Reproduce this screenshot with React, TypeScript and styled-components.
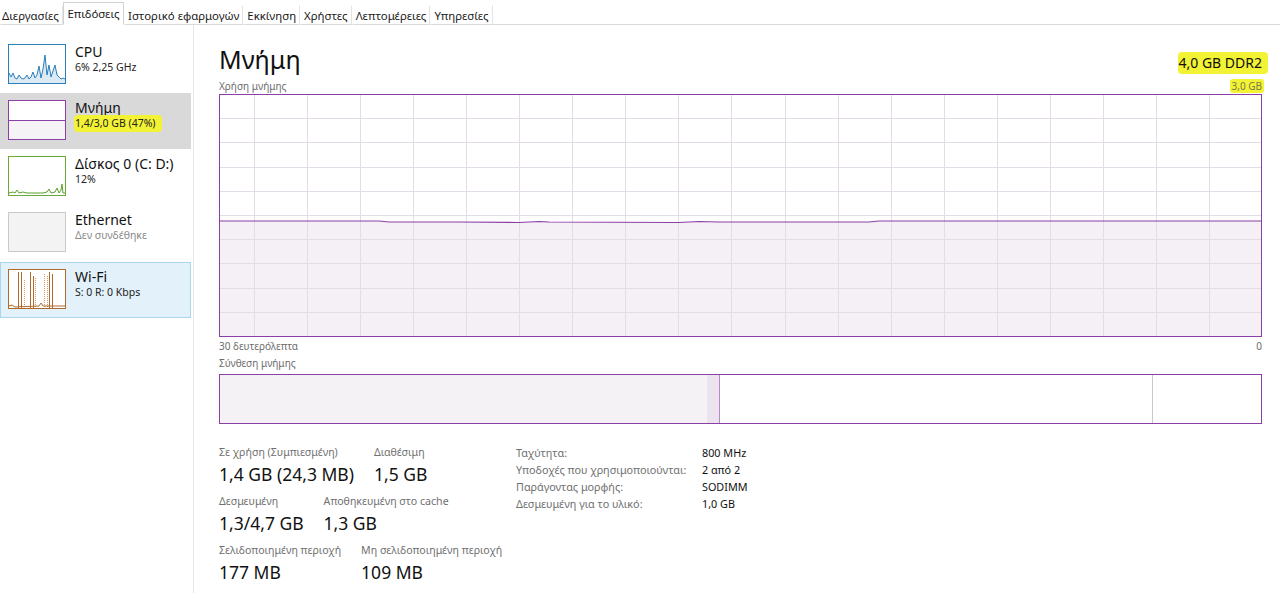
import React from "react";
import styled, { createGlobalStyle } from "styled-components";

const GlobalStyle = createGlobalStyle`
  html, body { margin: 0; padding: 0; background: #ffffff; }
  body { font-family: "Noto Sans", "Open Sans", sans-serif; color: #000; }
  * { box-sizing: border-box; }
`;

const PURPLE = "#8b3fa6";

const Root = styled.div`
  width: 1280px;
  height: 593px;
  display: flex;
  flex-direction: column;
  overflow: hidden;
  background: #fff;
`;

const TabBar = styled.div`
  height: 25px;
  display: flex;
  align-items: flex-end;
  border-bottom: 1px solid #dadada;
`;

const Tab = styled.div<{ $active?: boolean }>`
  height: ${(p) => (p.$active ? "23px" : "20px")};
  padding: 0 ${(p) => (p.$active ? "3.5px" : "3px")};
  margin-bottom: -1px;
  display: flex;
  align-items: center;
  font-size: 11.4px;
  color: #1a1a1a;
  background: #fff;
  border: 1px solid ${(p) => (p.$active ? "#d2d2d2" : "transparent")};
  border-bottom-color: ${(p) => (p.$active ? "#fff" : "#dadada")};
  border-right-color: ${(p) => (p.$active ? "#d2d2d2" : "#e4e4e4")};
  white-space: nowrap;
  &:first-child { border-left-color: transparent; padding-left: 1px; }
`;

const Body = styled.div`
  flex: 1;
  display: flex;
  min-height: 0;
`;

const Sidebar = styled.div`
  width: 194px;
  border-right: 1px solid #e6e6e6;
  padding-top: 12px;
  display: flex;
  flex-direction: column;
`;

const SideItem = styled.div<{ $state?: "selected" | "hover" }>`
  height: 56px;
  width: 191px;
  display: flex;
  align-items: center;
  gap: 9px;
  padding-left: 7px;
  margin-top: ${(p) => (p.$state === "hover" ? "1px" : "0")};
  background: ${(p) =>
    p.$state === "selected" ? "#d9d9d9" : p.$state === "hover" ? "#e3f1fa" : "transparent"};
  border: 1px solid ${(p) => (p.$state === "hover" ? "#a9d5ee" : "transparent")};
`;

const Thumb = styled.div<{ $color: string; $bg?: string }>`
  width: 58px;
  height: 40px;
  margin-top: -2px;
  border: 1px solid ${(p) => p.$color};
  background: ${(p) => p.$bg || "#fff"};
  flex: none;
  display: flex;
  svg { display: block; }
`;

const ItemText = styled.div`
  display: flex;
  flex-direction: column;
  margin-top: -13px;
`;

const ItemTitle = styled.div`
  font-size: 14px;
  line-height: 17px;
  color: #111;
`;

const ItemSub = styled.div<{ $muted?: boolean }>`
  font-size: 10.5px;
  line-height: 14px;
  color: ${(p) => (p.$muted ? "#8a8a8a" : "#222")};
`;

const Marker = styled.span<{ $trail?: boolean }>`
  background: #f3f335;
  border-radius: 4px;
  padding: 1px 6px 2px 1px;
  margin-left: -1px;
  margin-right: ${(p) => (p.$trail ? "-6px" : "0")};
`;

const Main = styled.div`
  flex: 1;
  padding: 13px 18px 0 25px;
  display: flex;
  flex-direction: column;
`;

const HeaderRow = styled.div`
  display: flex;
  justify-content: space-between;
  align-items: flex-end;
  height: 38px;
`;

const Title = styled.div`
  font-size: 25px;
  line-height: 34px;
  color: #111;
`;

const Spec = styled.div`
  font-size: 14px;
  line-height: 18px;
  color: #111;
  margin-bottom: 4px;
`;

const CaptionRow = styled.div`
  display: flex;
  justify-content: space-between;
  align-items: flex-end;
  height: 17px;
  margin-bottom: 1px;
`;

const Caption = styled.div`
  font-size: 10px;
  line-height: 13px;
  color: #6d6d6d;
`;

const SmallMark = styled.span`
  background: #f3f335;
  border-radius: 3px;
  padding: 0 2px;
  margin-right: -2px;
  color: #7a7a4a;
`;

const Graph = styled.div`
  height: 243px;
  svg { display: block; }
`;

const AxisRow = styled.div`
  display: flex;
  justify-content: space-between;
  height: 17px;
  padding-top: 3px;
`;

const CompCaption = styled(Caption)`
  margin-top: 3px;
  height: 17px;
`;

const CompBar = styled.div`
  height: 50px;
  border: 1px solid ${PURPLE};
  display: flex;
`;

const Seg = styled.div<{ $w: number; $bg: string; $line?: string }>`
  width: ${(p) => p.$w}px;
  flex: none;
  background: ${(p) => p.$bg};
  border-right: 1px solid ${(p) => p.$line || "transparent"};
`;

const SegFill = styled.div`
  flex: 1;
`;

const Stats = styled.div`
  display: flex;
  margin-top: 21px;
`;

const StatsLeft = styled.div`
  width: 297px;
  display: flex;
  flex-direction: column;
  gap: 4px;
`;

const StatRow = styled.div`
  display: flex;
  gap: 20px;
`;

const Stat = styled.div`
  display: flex;
  flex-direction: column;
`;

const StatLabel = styled.div`
  font-size: 10.6px;
  line-height: 14px;
  color: #707070;
  white-space: nowrap;
`;

const StatValue = styled.div`
  font-size: 17.5px;
  line-height: 31px;
  color: #111;
  white-space: nowrap;
`;

const Info = styled.div`
  display: grid;
  grid-template-columns: 186px auto;
  grid-auto-rows: 17px;
  align-content: start;
`;

const InfoLabel = styled.div`
  font-size: 10.8px;
  color: #707070;
  white-space: nowrap;
`;

const InfoValue = styled.div`
  font-size: 10.8px;
  color: #111;
  white-space: nowrap;
`;

const CpuThumb = () => (
  <svg width="56" height="38" viewBox="0 0 56 38">
    <polygon
      fill="#dbeaf5"
      points="0,38 0,28 2,32 4,28 6,33 8,34 10,30 12,33 14,34 16,33 18,30 20,34 22,32 24,27 26,33 28,30 30,21 32,33 34,24 36,10 38,30 40,20 42,32 44,26 46,20 48,30 50,32 52,34 54,33 56,34 56,38"
    />
    <polyline
      fill="none"
      stroke="#2a7fb8"
      strokeWidth="1"
      points="0,28 2,32 4,28 6,33 8,34 10,30 12,33 14,34 16,33 18,30 20,34 22,32 24,27 26,33 28,30 30,21 32,33 34,24 36,10 38,30 40,20 42,32 44,26 46,20 48,30 50,32 52,34 54,33 56,34"
    />
  </svg>
);

const MemThumb = () => (
  <svg width="56" height="38" viewBox="0 0 56 38">
    <rect x="0" y="19" width="56" height="19" fill="#f6f3f7" />
    <line x1="0" y1="19.5" x2="56" y2="19.5" stroke="#8b3fa6" strokeWidth="1" />
  </svg>
);

const DiskThumb = () => (
  <svg width="56" height="38" viewBox="0 0 56 38">
    <polyline
      fill="none"
      stroke="#5aa02c"
      strokeWidth="1"
      points="0,36 4,35 6,36 8,33 10,36 14,35 18,36 22,36 26,36 30,36 34,36 38,35 40,32 42,36 46,35 48,31 50,36 52,33 53,27 54,36 56,36"
    />
  </svg>
);

const WifiThumb = () => (
  <svg width="56" height="38" viewBox="0 0 56 38">
    <g stroke="#b06a2e" strokeWidth="1" fill="none">
      <line x1="9.5" y1="2" x2="9.5" y2="38" />
      <line x1="12.5" y1="2" x2="12.5" y2="38" />
      <line x1="21.5" y1="2" x2="21.5" y2="38" />
      <line x1="24.5" y1="6" x2="24.5" y2="38" />
      <line x1="40.5" y1="2" x2="40.5" y2="38" />
      <line x1="43.5" y1="4" x2="43.5" y2="38" />
    </g>
    <g stroke="#d89a6a" strokeWidth="1" strokeDasharray="1 1" fill="none">
      <line x1="26.5" y1="8" x2="26.5" y2="38" />
      <line x1="35.5" y1="4" x2="35.5" y2="38" />
      <line x1="38.5" y1="6" x2="38.5" y2="38" />
      <line x1="15.5" y1="10" x2="15.5" y2="38" />
    </g>
    <polyline fill="none" stroke="#b06a2e" points="0,36 3,35 6,37 30,36 32,33 34,36 56,36" />
  </svg>
);

const MemoryGraph = () => {
  const W = 1043;
  const H = 243;
  const rows = 10;
  const rh = (H - 1) / rows;
  const vlines: number[] = [];
  for (let x = 35; x < W - 1; x += 53.05) vlines.push(Math.round(x) + 0.5);
  const hlines: number[] = [];
  for (let i = 1; i < rows; i++) hlines.push(Math.round(i * rh) + 0.5);
  const pts =
    "0,127 160,127 170,128 240,128 300,128.5 320,127.5 330,128 460,128.5 480,127.5 500,128 650,128 660,127 1043,127";
  return (
    <svg width={W} height={H} viewBox={`0 0 ${W} ${H}`}>
      <rect x="0" y="0" width={W} height={H} fill="#fff" />
      <polygon points={`${pts} 1043,${H} 0,${H}`} fill="#f4f0f5" />
      {hlines.map((y) => (
        <line key={`h${y}`} x1="0" y1={y} x2={W} y2={y} stroke="#e3dbe6" strokeWidth="1" />
      ))}
      {vlines.map((x) => (
        <line key={`v${x}`} x1={x} y1="0" x2={x} y2={H} stroke="#e3dbe6" strokeWidth="1" />
      ))}
      <polyline points={pts} fill="none" stroke={PURPLE} strokeWidth="1.2" />
      <rect x="0.5" y="0.5" width={W - 1} height={H - 1} fill="none" stroke={PURPLE} strokeWidth="1" />
    </svg>
  );
};

const tabs = [
  "Διεργασίες",
  "Επιδόσεις",
  "Ιστορικό εφαρμογών",
  "Εκκίνηση",
  "Χρήστες",
  "Λεπτομέρειες",
  "Υπηρεσίες",
];

export default function App() {
  return (
    <Root>
      <GlobalStyle />
      <TabBar>
        {tabs.map((t) => (
          <Tab key={t} $active={t === "Επιδόσεις"}>
            {t}
          </Tab>
        ))}
      </TabBar>
      <Body>
        <Sidebar>
          <SideItem>
            <Thumb $color="#2a7fb8">
              <CpuThumb />
            </Thumb>
            <ItemText>
              <ItemTitle>CPU</ItemTitle>
              <ItemSub>6% 2,25 GHz</ItemSub>
            </ItemText>
          </SideItem>
          <SideItem $state="selected">
            <Thumb $color={PURPLE}>
              <MemThumb />
            </Thumb>
            <ItemText>
              <ItemTitle>Μνήμη</ItemTitle>
              <ItemSub>
                <Marker>1,4/3,0 GB (47%)</Marker>
              </ItemSub>
            </ItemText>
          </SideItem>
          <SideItem>
            <Thumb $color="#6aa83a">
              <DiskThumb />
            </Thumb>
            <ItemText>
              <ItemTitle>Δίσκος 0 (C: D:)</ItemTitle>
              <ItemSub>12%</ItemSub>
            </ItemText>
          </SideItem>
          <SideItem>
            <Thumb $color="#c9c9c9" $bg="#f3f3f3" />
            <ItemText>
              <ItemTitle>Ethernet</ItemTitle>
              <ItemSub $muted>Δεν συνδέθηκε</ItemSub>
            </ItemText>
          </SideItem>
          <SideItem $state="hover">
            <Thumb $color="#b06a2e">
              <WifiThumb />
            </Thumb>
            <ItemText>
              <ItemTitle>Wi-Fi</ItemTitle>
              <ItemSub>S: 0 R: 0 Kbps</ItemSub>
            </ItemText>
          </SideItem>
        </Sidebar>
        <Main>
          <HeaderRow>
            <Title>Μνήμη</Title>
            <Spec>
              <Marker $trail>4,0 GB DDR2</Marker>
            </Spec>
          </HeaderRow>
          <CaptionRow>
            <Caption>Χρήση μνήμης</Caption>
            <Caption>
              <SmallMark>3,0 GB</SmallMark>
            </Caption>
          </CaptionRow>
          <Graph>
            <MemoryGraph />
          </Graph>
          <AxisRow>
            <Caption>30 δευτερόλεπτα</Caption>
            <Caption>0</Caption>
          </AxisRow>
          <CompCaption>Σύνθεση μνήμης</CompCaption>
          <CompBar>
            <Seg $w={487} $bg="#f4f2f4" />
            <Seg $w={13} $bg="#ebe3ee" $line="#b48cc2" />
            <Seg $w={433} $bg="#fff" $line="#c8c8c8" />
            <SegFill />
          </CompBar>
          <Stats>
            <StatsLeft>
              <StatRow>
                <Stat>
                  <StatLabel>Σε χρήση (Συμπιεσμένη)</StatLabel>
                  <StatValue>1,4 GB (24,3 MB)</StatValue>
                </Stat>
                <Stat>
                  <StatLabel>Διαθέσιμη</StatLabel>
                  <StatValue>1,5 GB</StatValue>
                </Stat>
              </StatRow>
              <StatRow>
                <Stat>
                  <StatLabel>Δεσμευμένη</StatLabel>
                  <StatValue>1,3/4,7 GB</StatValue>
                </Stat>
                <Stat>
                  <StatLabel>Αποθηκευμένη στο cache</StatLabel>
                  <StatValue>1,3 GB</StatValue>
                </Stat>
              </StatRow>
              <StatRow>
                <Stat>
                  <StatLabel>Σελιδοποιημένη περιοχή</StatLabel>
                  <StatValue>177 MB</StatValue>
                </Stat>
                <Stat>
                  <StatLabel>Μη σελιδοποιημένη περιοχή</StatLabel>
                  <StatValue>109 MB</StatValue>
                </Stat>
              </StatRow>
            </StatsLeft>
            <Info>
              <InfoLabel>Ταχύτητα:</InfoLabel>
              <InfoValue>800 MHz</InfoValue>
              <InfoLabel>Υποδοχές που χρησιμοποιούνται:</InfoLabel>
              <InfoValue>2 από 2</InfoValue>
              <InfoLabel>Παράγοντας μορφής:</InfoLabel>
              <InfoValue>SODIMM</InfoValue>
              <InfoLabel>Δεσμευμένη για το υλικό:</InfoLabel>
              <InfoValue>1,0 GB</InfoValue>
            </Info>
          </Stats>
        </Main>
      </Body>
    </Root>
  );
}
